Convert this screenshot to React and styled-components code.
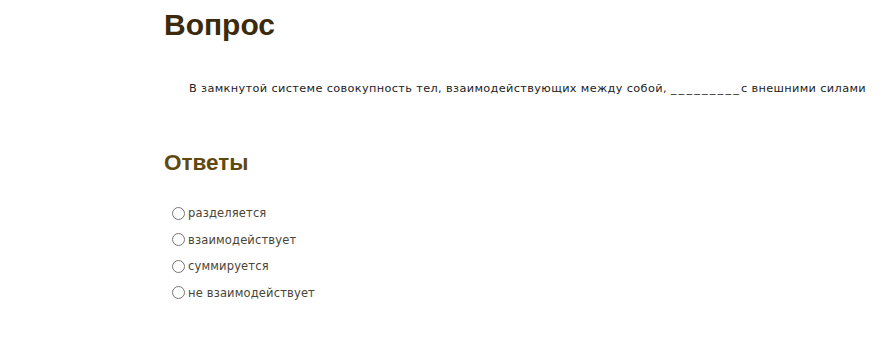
import React from "react";
import styled, { createGlobalStyle } from "styled-components";

const answers = ["разделяется", "взаимодействует", "суммируется", "не взаимодействует"];

const GlobalStyle = createGlobalStyle`
  body {
    margin: 0;
    background: #fff;
    font-family: "DejaVu Sans", "Open Sans", sans-serif;
  }
`;

export default function App() {
  return (
    <Page>
      <GlobalStyle />
      <Title>Вопрос</Title>
      <Question>
        В замкнутой системе совокупность тел, взаимодействующих между собой, <Blank>_________</Blank>с внешними силами
      </Question>
      <SubTitle>Ответы</SubTitle>
      <Answers>
        {answers.map((a) => (
          <Answer key={a}>
            <Radio type="radio" name="answer" />
            <span>{a}</span>
          </Answer>
        ))}
      </Answers>
    </Page>
  );
}

const Page = styled.div`
  padding: 8px 0 0 164px;
`;

const Title = styled.h1`
  margin: 0;
  font-family: "Liberation Sans", Arial, sans-serif;
  font-size: 30px;
  font-weight: bold;
  line-height: 34px;
  color: #3b2a0c;
`;

const Question = styled.p`
  margin: 39px 0 0 25px;
  font-size: 11.3px;
  letter-spacing: 0.36px;
  line-height: 16px;
  color: #222;
  white-space: nowrap;
`;

const Blank = styled.span`
  letter-spacing: 2.15px;
`;

const SubTitle = styled.h2`
  margin: 53px 0 0;
  font-family: "Liberation Sans", Arial, sans-serif;
  font-size: 22.5px;
  font-weight: bold;
  line-height: 26px;
  color: #5e4a10;
`;

const Answers = styled.div`
  display: flex;
  flex-direction: column;
  gap: 10px;
  margin: 29px 0 0 8px;
`;

const Answer = styled.label`
  display: flex;
  align-items: center;
  gap: 3px;
  height: 16.5px;
  font-size: 11.5px;
  letter-spacing: 0.15px;
  color: #4a4536;
`;

const Radio = styled.input`
  margin: 0;
  width: 13px;
  height: 13px;
`;
